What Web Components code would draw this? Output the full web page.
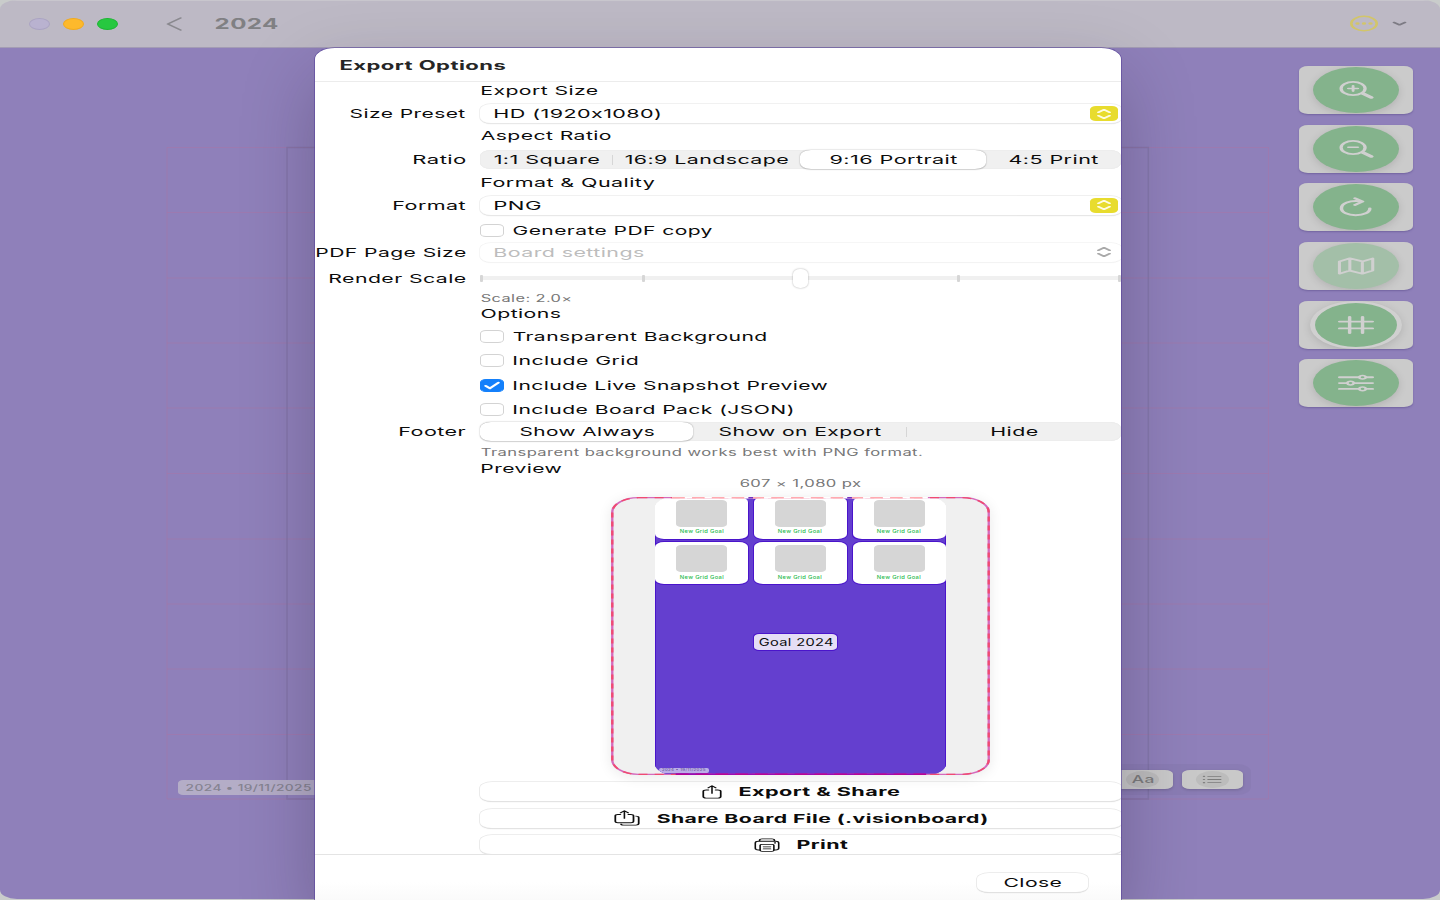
<!DOCTYPE html>
<html lang="en">
<head>
<meta charset="utf-8">
<title>2024</title>
<style>
html,body{margin:0;height:100%;overflow:hidden;background:#c9cccb}
body{font-family:Inter,"Liberation Sans",sans-serif;font-size:12.3px;color:#0c0c0c}
</style>
</head>
<body>
<vision-app></vision-app>
<script>
const define = (name, html) => {
  const t = document.createElement('template');
  t.innerHTML = html;
  customElements.define(name, class extends HTMLElement {
    connectedCallback() {
      if (this.shadowRoot) return;
      this.attachShadow({mode: 'open'}).append(t.content.cloneNode(true));
    }
  });
};

/* Wide label: stretches its glyphs so that the ink is "w" pixels wide. */
const ctx = document.createElement('canvas').getContext('2d');
customElements.define('wide-text', class extends HTMLElement {
  connectedCallback() {
    if (this.shadowRoot) return;
    const w = +this.getAttribute('w'), size = +(this.getAttribute('size') || 12.3), weight = this.getAttribute('weight') || 430;
    ctx.font = `${weight} ${size * 10}px Inter, "Liberation Sans", sans-serif`;
    const m = ctx.measureText(this.textContent);
    const left = -m.actualBoundingBoxLeft / 10, ink = (m.actualBoundingBoxRight + m.actualBoundingBoxLeft) / 10;
    const n = this.textContent.length, ls = .25;
    const k = (w - .8) / (ink + ls * (n - 1)), lh = Math.round(size * 1.2);
    const dy = size < 10 ? 0 : -.5;
    this.attachShadow({mode: 'open'}).innerHTML = `<style>
      :host{display:block;flex:none;width:${w}px;height:${lh}px;line-height:${lh}px;font-size:${size}px;font-weight:${weight};white-space:nowrap}
      span{display:inline-block;letter-spacing:${ls}px;transform-origin:0 50%;transform:translate(${(-left * k * .4).toFixed(2)}px,${dy}px) scaleX(${k.toFixed(4)})}
    </style><span><slot></slot></span>`;
  }
});

/* Icons live in a narrow coordinate space that is stretched horizontally. */
const ICONS = {
  back: [16, 14, 9, 14, '<path d="M8.2 1L1 7l7.2 6" stroke-width="1.3"/>'],
  more: [30, 17, 17, 17, '<circle cx="8.5" cy="8.5" r="7.2" stroke-width="1.5"/><g fill="currentColor" stroke="none"><circle cx="4.8" cy="8.5" r="1.25"/><circle cx="8.5" cy="8.5" r="1.25"/><circle cx="12.2" cy="8.5" r="1.25"/></g>'],
  down: [15, 6, 8, 6, '<path d="M1 1.4l3 2.5 3-2.5" stroke-width="1.4"/>'],
  zoomin: [40, 20, 22, 20, '<circle cx="9.4" cy="8.5" r="6.6" stroke-width="1.8"/><path d="M6.8 8.5h5.2M9.4 5.9v5.2" stroke-width="1.6"/><path d="M14.8 13.4l4.6 4" stroke-width="2.6"/>'],
  zoomout: [40, 20, 22, 20, '<circle cx="9.4" cy="8.5" r="6.6" stroke-width="1.8"/><path d="M6.8 8.3h5.2" stroke-width="1.6"/><path d="M14.8 13.4l4.6 4" stroke-width="2.6"/>'],
  rotate: [40, 20, 22, 20, '<path d="M13.4 4.3C7.4 3 3 6.4 3 11.2c0 4.2 3.6 7 7.8 7 4.6 0 7.8-2.8 7.8-6.8" stroke-width="1.9"/><path d="M10.4 1.3l4.2 3.3-4.2 3.4" stroke-width="1.9"/>'],
  map: [40, 20, 22, 20, '<path d="M1.9 5.4l5.7-3.1 6.9 3.1 5.7-3v12.2l-5.7 3.1-6.9-3.1-5.7 3.1zM7.6 2.6v12M14.5 5.4v12" stroke-width="1.7"/>'],
  hash: [40, 20, 22, 20, '<path d="M2 6.6h18M2 13.4h18M7.5 2v16M14.6 2v16" stroke-width="1.9"/>'],
  tune: [40, 20, 22, 20, '<path d="M2 4.2h18M2 10.1h18M2 15.9h18" stroke-width="1.9"/><g fill="#84b38c" stroke-width="1.5"><circle cx="14.6" cy="4.2" r="1.8"/><circle cx="8" cy="10.1" r="1.8"/><circle cx="14.6" cy="15.9" r="1.8"/></g>'],
  list: [20, 9, 11, 9, '<path d="M3.2 1.3h7.2M3.2 4.5h7.2M3.2 7.7h7.2" stroke-width=".8"/><path d="M1 1.3h.2M1 4.5h.2M1 7.7h.2" stroke-width="1.2"/>'],
  updown: [16, 12, 9, 12, '<path d="M1.3 4.3l3.2-2.6 3.2 2.6M1.3 7.7l3.2 2.6 3.2-2.6" stroke-width="1.5"/>'],
  check: [18, 9, 10, 9, '<path d="M1.5 4.9l2.4 2.4 4.6-5.6" stroke-width="1.7"/>'],
  share: [20, 14, 11, 14, '<path d="M3.6 4.9H2.3Q.7 4.9.7 6.3v5.2q0 1.6 1.6 1.6h6.4q1.6 0 1.6-1.6V6.3q0-1.4-1.6-1.4H7.4" stroke-width=".95"/><path d="M5.5 8.4V.9M3.4 2.9L5.5.8l2.1 2.1" stroke-width=".85"/>'],
  share2: [26, 16, 14, 16, '<path d="M3.5 4.4H2Q.7 4.4.7 5.7v5.6q0 1.4 1.4 1.4h7q1.4 0 1.4-1.4V5.7q0-1.3-1.4-1.3H7.6" stroke-width=".95"/><path d="M5.6 8.4V.9M3.5 2.9L5.6.8l2.1 2.1" stroke-width=".85"/><path d="M11.8 6.1q1.5 0 1.5 1.4v6.1q0 1.5-1.5 1.5H5.2q-1.4 0-1.4-1.2" stroke-width=".95"/>'],
  print: [26, 14, 14, 14, '<path d="M3.2 12H2.4Q.7 12 .7 10.3V4.9q0-1.7 1.7-1.7h9.2q1.7 0 1.7 1.7v5.4q0 1.7-1.7 1.7h-.8M3 3.1V2.2Q3 .9 4.3.9h5.4Q11 .9 11 2.2v.9" stroke-width=".85"/><rect x="3.3" y="6.3" width="7.4" height="7" rx="1" stroke-width=".85"/><path d="M5 8.8h4M5 10.9h4" stroke-width=".7"/><circle cx="11.2" cy="4.9" r=".35" stroke-width=".5"/>']
};
customElements.define('wide-icon', class extends HTMLElement {
  connectedCallback() {
    if (this.shadowRoot) return;
    const [w, h, vw, vh, body] = ICONS[this.getAttribute('name')];
    this.attachShadow({mode: 'open'}).innerHTML = `<style>:host{display:block;flex:none;width:${w}px;height:${h}px}svg{display:block}</style>
      <svg width="${w}" height="${h}" viewBox="0 0 ${vw} ${vh}" preserveAspectRatio="none" fill="none" stroke="currentColor" stroke-linecap="round" stroke-linejoin="round">${body}</svg>`;
  }
});

define('title-bar', `<style>
:host{display:flex;align-items:center;flex:none;height:48px;box-sizing:border-box;padding:0 33.5px 1px 29px;background:#bdb9c5;border-bottom:1px solid #a39cb4;border-top:1px solid #c8c6cd;color:#808083}
i{box-sizing:border-box;width:21px;height:12px;border-radius:50%;margin-right:13.2px;background:#b9b2d0;border:1px solid #aaa3c2}
.y{background:#fdb92c;border-color:#f0aa20}.g{background:#27c840;border-color:#1fb535}
.back{margin-left:34px;color:#8a898f}.t{margin-left:33px;flex:1}
.more{color:#d2c56a}.down{margin-left:12.5px;color:#7d7b84}
</style><i></i><i class="y"></i><i class="g"></i><wide-icon class="back" name="back"></wide-icon><div class="t"><wide-text w="62.5" size="14.3" weight="650">2024</wide-text></div><wide-icon class="more" name="more"></wide-icon><wide-icon class="down" name="down"></wide-icon>`);

define('tool-button', `<style>
:host{display:flex;align-items:center;justify-content:center;width:114px;height:48px;border-radius:9px/5px;background:#cbcbcb;box-shadow:0 1px 2px rgba(60,45,110,.35);overflow:hidden;color:#d0d0d0}
div{display:flex;align-items:center;justify-content:center;box-sizing:border-box;width:86px;height:46px;border-radius:50%;background:#84b38c;box-shadow:0 2px 9px rgba(0,0,0,.13)}
:host([faded]) div{background:#a3bfa8}
:host([ring]) div{width:92px;height:48px;border:5.5px solid #d0d0d0;border-width:2.5px 5.5px}
</style><div><slot></slot></div>`);

define('tool-rail', `<style>:host{display:flex;flex-direction:column;gap:10.65px}</style>
<tool-button><wide-icon name="zoomin"></wide-icon></tool-button>
<tool-button><wide-icon name="zoomout"></wide-icon></tool-button>
<tool-button><wide-icon name="rotate"></wide-icon></tool-button>
<tool-button faded><wide-icon name="map"></wide-icon></tool-button>
<tool-button ring><wide-icon name="hash"></wide-icon></tool-button>
<tool-button><wide-icon name="tune"></wide-icon></tool-button>`);

define('board-canvas', `<style>
:host{display:block;position:relative;flex:1;background:#8f80ba;overflow:hidden}
svg,.rail,.stamp,.dock{position:absolute}
svg{left:0;top:0}.rail{right:27px;top:18px}
.stamp{left:178px;top:731.5px;width:160px;height:15.5px;box-sizing:border-box;padding-left:8px;border-radius:5px/3px;background:#b4adc7;color:#858391;display:flex;align-items:center}
.dock{left:1090px;top:716px;height:31px;box-sizing:border-box;padding:0 8px 0 22px;border-radius:14px/8px;background:rgba(80,70,110,.07);display:flex;align-items:center;gap:8.5px}
.dock div{width:61px;height:19.5px;border-radius:8px/4px;background:#c9c9c9;display:flex;align-items:center;justify-content:center;box-shadow:0 1px 3px rgba(0,0,0,.18);color:#7c7c7c}
.dock span{width:33px;height:17px;border-radius:50%;background:#bcbcbc;display:flex;align-items:center;justify-content:center}
</style>
<svg width="1440" height="852" fill="none"><g transform="translate(0 -48)"><path d="M167 147.5H1268.5V799H167zM167 212.5H1268.5M167 278H1268.5M167 343H1268.5M167 408H1268.5M167 473.5H1268.5M167 539H1268.5M167 604H1268.5M167 669H1268.5M167 734.5H1268.5" stroke="#b5709e" stroke-opacity=".36"/><path d="M287 147.5H1148.3V799H287z" stroke="#7c6fa0" stroke-width="1.5" stroke-opacity=".55"/></g></svg>
<tool-rail class="rail"></tool-rail>
<div class="stamp"><wide-text w="125" size="8.8" weight="500">2024 • 19/11/2025</wide-text></div>
<div class="dock"><div><span><wide-text w="22" size="10.5" weight="500">Aa</wide-text></span></div><div><span><wide-icon name="list"></wide-icon></span></div></div>`);

define('form-row', `<style>
:host{display:grid;grid-template:100%/150px 641px;column-gap:15px;align-items:center;height:var(--h)}
.l,.c{display:flex;align-items:center;height:100%;min-width:0}.l{justify-content:flex-end}
.c ::slotted(wide-text){margin-left:.9px}
</style><div class="l"><slot name="label"></slot></div><div class="c"><slot></slot></div>`);

define('pop-select', `<style>
:host{display:flex;align-items:center;justify-content:space-between;box-sizing:border-box;width:642px;flex:none;height:19px;padding:0 4px 0 14px;border-radius:11px/6px;background:#fff;box-shadow:0 0 0 .7px #ececec,0 1px 1px rgba(0,0,0,.17)}
div{width:28px;height:15px;border-radius:6px/3.5px;background:#e8dc2e;color:#fffce0;display:flex;align-items:center;justify-content:center}
:host([disabled]){color:#bdbdbd;box-shadow:0 0 0 .7px #f3f3f3,0 1px 1px rgba(0,0,0,.06)}
:host([disabled]) div{background:none;color:#a9a9a9}
</style><slot></slot><div><wide-icon name="updown"></wide-icon></div>`);

define('seg-control', `<style>
:host{display:flex;flex:none;width:641px;height:19px;border-radius:11px/6px;background:#f0f0f0;box-shadow:inset 0 0 1px #d8d8d8}
</style><slot></slot>`);
define('seg-item', `<style>
:host{display:flex;align-items:center;justify-content:center;flex:none;box-sizing:border-box;width:var(--w);position:relative}
:host([on]){background:#fff;border-radius:11px/6px;box-shadow:0 0 1.5px rgba(0,0,0,.35),0 .5px 1px rgba(0,0,0,.12)}
:host([bar])::after{content:"";position:absolute;right:0;top:4.5px;width:1px;height:10px;background:#d6d6d6}
</style><slot></slot>`);

define('check-box', `<style>
:host{display:flex;align-items:center;gap:9.3px}
div{box-sizing:border-box;width:24px;height:13px;border-radius:6px/3.5px;border:1px solid #d3d3d3;background:#fff;display:flex;align-items:center;justify-content:center;color:#fff}
wide-icon{display:none}
:host([on]) div{background:#1480fb;border-color:#1480fb}:host([on]) wide-icon{display:block}
</style><div><wide-icon name="check"></wide-icon></div><slot></slot>`);

define('scale-slider', `<style>
:host{display:grid;grid-template-columns:161.5px 151.5px 164px 160.5px 3px;align-items:center;width:641px;height:19px;flex:none;background:linear-gradient(#f0f0f0,#f0f0f0) center/100% 4px no-repeat}
i{width:3px;height:7px;border-radius:1px;background:#d6d6d6}
b{width:15px;height:19px;border-radius:7px/5px;background:#fff;box-shadow:0 0 2px rgba(0,0,0,.35)}
</style><i></i><i></i><b></b><i></i><i></i>`);

define('goal-card', `<style>
:host{display:flex;flex-direction:column;align-items:center;box-sizing:border-box;height:42px;padding-top:3px;border-radius:9px/5px;background:#fff;color:#1fba4c;box-shadow:0 0 0 1px #4a14cb}
div{width:51px;height:27px;border-radius:5px/3px;background:#d6d6d6;margin-bottom:2.9px}
</style><div></div><wide-text w="44" size="4.6" weight="550">New Grid Goal</wide-text>`);

define('board-preview', `<style>
:host{display:block;position:relative;width:379px;height:278px;margin-left:131px;border-radius:28px/15px;background:#f0f0f0;box-shadow:0 2px 14px rgba(0,0,0,.09)}
.p{position:absolute;left:44px;top:0;width:291px;height:278px;overflow:hidden;border-radius:20px/11px;background:linear-gradient(#fff 14px,#643fcf 14px);box-shadow:none}
.g{display:grid;grid-template-columns:repeat(3,93.2px);column-gap:5.7px;row-gap:3.5px;background:linear-gradient(90deg,#fff 60px,#643fcf 60px 231px,#fff 231px) top/100% 14px no-repeat}
.b{height:264px;margin-top:-73.5px;}
.p::before{content:"";position:absolute;inset:14px 0 0;background:#643fcf;box-shadow:inset 1px 0 #4a14cb,inset -1px 0 #4a14cb}
.g{position:relative}
.g>:nth-child(1){border-top-left-radius:0;box-shadow:1px 1px 0 #4a14cb}
.g>:nth-child(3){border-top-right-radius:0;box-shadow:-1px 1px 0 #4a14cb}
.goal{position:absolute;left:99px;top:137px;box-sizing:border-box;width:83px;height:16px;border-radius:5px/3px;background:#e5def5;box-shadow:0 0 0 1px #4a14cb;display:flex;align-items:center;justify-content:center}
.st{position:absolute;left:4px;top:271px;width:50px;height:5.5px;border-radius:2px;background:#bcaee8;color:#5b4a8c;display:flex;align-items:center;justify-content:center}
svg{position:absolute;left:0;top:0}
</style>
<div class="p"><div class="g"><goal-card></goal-card><goal-card></goal-card><goal-card></goal-card><goal-card></goal-card><goal-card></goal-card><goal-card></goal-card></div>
<div class="goal"><wide-text w="74" size="10.3">Goal 2024</wide-text></div><div class="st"><wide-text w="44" size="3.6">2024 • 19/11/2025</wide-text></div></div>
<svg width="379" height="278" viewBox="0 0 210.5 278" preserveAspectRatio="none" fill="none"><rect x=".7" y=".7" width="209.1" height="276.6" rx="14.5" stroke="#d56abd" stroke-width="1.3"/><rect x=".7" y=".7" width="209.1" height="276.6" rx="14.5" stroke="#f04a72" stroke-width="1.3" stroke-dasharray="5 4"/>
<g stroke-width="1.4"><path d="M34 .7H176" stroke="#fff"/><path d="M34 .7H176" stroke="#ffaab0" stroke-dasharray="7 4"/><path d="M76.3 .7h2.6M131.2 .7h2.6" stroke="#7430c0"/><path d="M36 277.3H175" stroke="#9a0bb5"/><path d="M36 277.3H175" stroke="#b50596" stroke-dasharray="7 4"/></g></svg>`);

define('wide-button', `<style>
:host{display:flex;align-items:center;justify-content:center;flex:none;box-sizing:border-box;width:var(--w,642px);height:19px;gap:var(--gap,17px);border-radius:12px/6px;background:#fff;box-shadow:0 0 0 .8px #e8e8e8,0 1px 1px rgba(0,0,0,.2)}
</style><slot></slot>`);

define('export-sheet', `<style>
:host{display:flex;flex-direction:column;box-sizing:border-box;width:806px;height:852px;background:#fff;border-radius:20px 20px 0 0/11px 11px 0 0;overflow:hidden}
header{flex:none;display:flex;align-items:center;padding:2px 0 0 25px;box-sizing:border-box;border-bottom:1px solid #ececec;color:#262626;height:34px}
main{height:772px;flex:none;overflow:hidden}
.note{color:#777}
.center{width:641px;display:flex;justify-content:center;color:#777}
.acts{display:flex;flex-direction:column;gap:7.7px;padding-left:164.5px}
footer{flex:1;display:flex;justify-content:flex-end;align-items:flex-start;padding:18px 33.5px 0 0;border-top:1px solid #e4e4e4;background:linear-gradient(#fff 60%,#fafafa)}
</style>
<header><wide-text w="165" size="12.6" weight="650">Export Options</wide-text></header>
<main>
<form-row style="--h:17px"><wide-text w="116">Export Size</wide-text></form-row>
<form-row style="--h:29px"><wide-text slot="label" w="115">Size Preset</wide-text><pop-select><wide-text w="168">HD (1920x1080)</wide-text></pop-select></form-row>
<form-row style="--h:14px"><wide-text w="130">Aspect Ratio</wide-text></form-row>
<form-row style="--h:35px"><wide-text slot="label" w="52">Ratio</wide-text><seg-control>
<seg-item bar style="--w:133px"><wide-text w="105">1:1 Square</wide-text></seg-item><seg-item style="--w:187px"><wide-text w="163">16:9 Landscape</wide-text></seg-item><seg-item on style="--w:186px"><wide-text w="127">9:16 Portrait</wide-text></seg-item><seg-item style="--w:135px"><wide-text w="89">4:5 Print</wide-text></seg-item></seg-control></form-row>
<form-row style="--h:10px"><wide-text w="173">Format &amp; Quality</wide-text></form-row>
<form-row style="--h:36px"><wide-text slot="label" w="72">Format</wide-text><pop-select><wide-text w="46">PNG</wide-text></pop-select></form-row>
<form-row style="--h:15px"><check-box><wide-text w="199">Generate PDF copy</wide-text></check-box></form-row>
<form-row style="--h:28px"><wide-text slot="label" w="149">PDF Page Size</wide-text><pop-select disabled><wide-text w="149">Board settings</wide-text></pop-select></form-row>
<form-row style="--h:24px"><wide-text slot="label" w="136">Render Scale</wide-text><scale-slider></scale-slider></form-row>
<form-row style="--h:17px"><wide-text class="note" w="90" size="9.8">Scale: 2.0×</wide-text></form-row>
<form-row style="--h:13px"><wide-text w="79">Options</wide-text></form-row>
<form-row style="--h:33px"><check-box><wide-text w="253">Transparent Background</wide-text></check-box></form-row>
<form-row style="--h:15px"><check-box><wide-text w="124">Include Grid</wide-text></check-box></form-row>
<form-row style="--h:34px"><check-box on><wide-text w="314">Include Live Snapshot Preview</wide-text></check-box></form-row>
<form-row style="--h:14px"><check-box><wide-text w="279">Include Board Pack (JSON)</wide-text></check-box></form-row>
<form-row style="--h:31px"><wide-text slot="label" w="66">Footer</wide-text><seg-control><seg-item on style="--w:213px"><wide-text w="134">Show Always</wide-text></seg-item><seg-item bar style="--w:214px"><wide-text w="162">Show on Export</wide-text></seg-item><seg-item style="--w:214px"><wide-text w="46">Hide</wide-text></seg-item></seg-control></form-row>
<form-row style="--h:12px"><wide-text class="note" w="441" size="9.8">Transparent background works best with PNG format.</wide-text></form-row>
<form-row style="--h:19px"><wide-text w="80">Preview</wide-text></form-row>
<form-row style="--h:11px"><div class="center"><wide-text w="121" size="9.8">607 × 1,080 px</wide-text></div></form-row>
<form-row style="--h:293px"><board-preview></board-preview></form-row>
<div class="acts">
<wide-button><wide-icon name="share"></wide-icon><wide-text w="160" weight="650">Export &amp; Share</wide-text></wide-button>
<wide-button><wide-icon name="share2"></wide-icon><wide-text w="330" weight="650">Share Board File (.visionboard)</wide-text></wide-button>
<wide-button><wide-icon name="print"></wide-icon><wide-text w="50.5" weight="650">Print</wide-text></wide-button>
</div>
</main>
<footer><wide-button style="--w:111px"><wide-text w="57">Close</wide-text></wide-button></footer>`);

define('vision-app', `<style>
:host{display:block;width:1440px;height:900px;position:relative;overflow:hidden}
.win{display:flex;flex-direction:column;height:899px;border-radius:17px/9px;overflow:hidden}
.sheet{position:absolute;left:315px;top:48px;box-shadow:0 0 0 .6px #59449b,0 30px 72px rgba(30,20,45,.27)}
</style><div class="win"><title-bar></title-bar><board-canvas></board-canvas></div><export-sheet class="sheet"></export-sheet>`);
</script>
</body>
</html>
